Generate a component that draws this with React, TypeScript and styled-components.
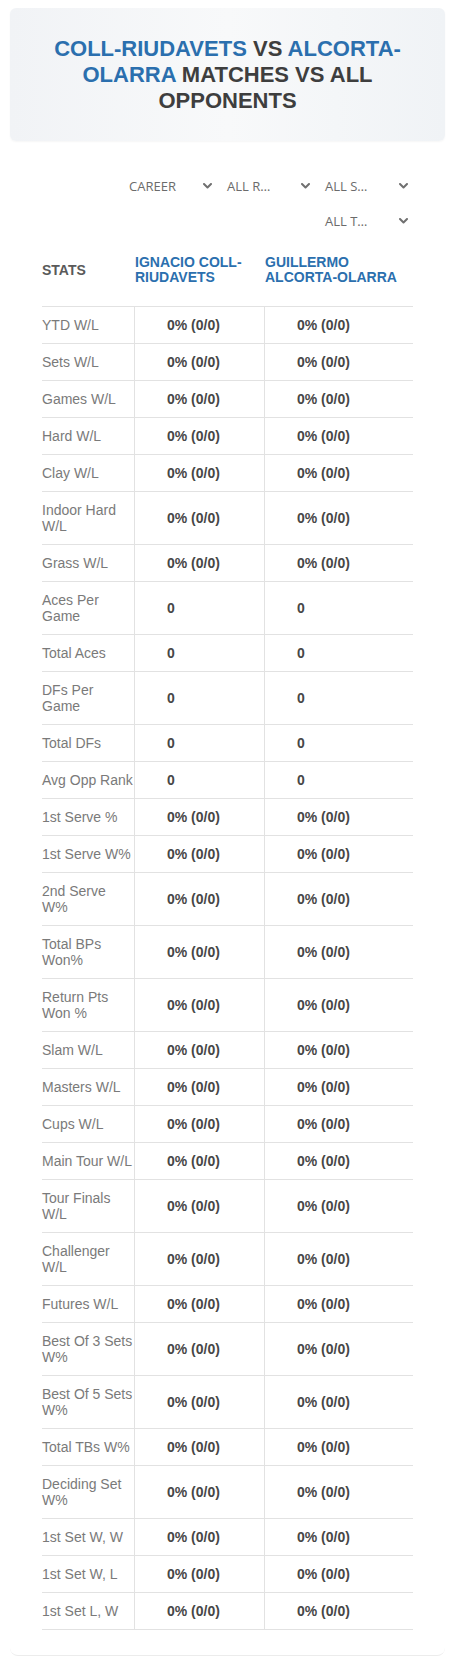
import React from "react";
import styled, { createGlobalStyle } from "styled-components";

const GlobalStyle = createGlobalStyle`
  body {
    margin: 0;
    background: #ffffff;
    font-family: "Liberation Sans", Arial, sans-serif;
  }
`;

const Page = styled.div`
  padding: 8px 10px 0;
`;

const Card = styled.div`
  border-bottom: 1px solid #ececec;
  border-radius: 0 0 8px 8px;
  padding-bottom: 25px;
`;

const Hero = styled.div`
  height: 133px;
  box-sizing: border-box;
  padding: 28px 30px 27px;
  border-radius: 6px;
  background: linear-gradient(90deg, #f1f3f6 0%, #f8f9fa 50%, #f0f3f6 100%);
  box-shadow: 0 1px 2px rgba(0, 0, 0, 0.04);
  text-align: center;
`;

const Title = styled.h1`
  margin: 0;
  font-size: 22px;
  line-height: 26px;
  font-weight: 700;
  color: #3e3e3e;
  text-transform: uppercase;
`;

const Player = styled.span`
  color: #2b6fae;
`;

const Body = styled.div`
  padding: 27px 32px 0;
`;

const Filters = styled.div`
  display: flex;
  flex-wrap: wrap;
  justify-content: flex-end;
  column-gap: 2px;
`;

const Select = styled.div`
  width: 96px;
  height: 35px;
  box-sizing: border-box;
  padding: 0 5px 0 8px;
  display: flex;
  align-items: center;
  justify-content: space-between;
  font-family: "Open Sans", sans-serif;
  font-size: 13px;
  color: #6b6b6b;
  text-transform: uppercase;
  cursor: pointer;
`;

const Chevron = () => (
  <svg width="9" height="6" viewBox="0 0 9 6" fill="none">
    <path d="M1 1l3.5 3.5L8 1" stroke="#707070" strokeWidth="2" strokeLinecap="round" strokeLinejoin="round" />
  </svg>
);

const Grid = styled.div`
  display: grid;
  grid-template-columns: 92px 130px 149px;
`;

const HeadRow = styled(Grid)`
  align-items: center;
  padding: 17px 0 21px;
  border-bottom: 1px solid #e2e2e2;
`;

const HeadCell = styled.div<{ $blue?: boolean }>`
  padding-left: ${p => (p.$blue ? "1px" : "0")};
  font-size: 14px;
  line-height: 15px;
  font-weight: 700;
  text-transform: uppercase;
  color: ${p => (p.$blue ? "#2b6fae" : "#5a5a5a")};
`;

const Row = styled(Grid)`
  border-bottom: 1px solid #e2e2e2;
`;

const Label = styled.div`
  padding: 10px 0;
  font-size: 14px;
  line-height: 16px;
  color: #7a7a7a;
`;

const Value = styled.div`
  display: flex;
  align-items: center;
  padding-left: 32px;
  border-left: 1px solid #e2e2e2;
  font-size: 14px;
  font-weight: 700;
  color: #474747;
`;

const pct = "0% (0/0)";

const stats: [string, string][] = [
  ["YTD W/L", pct],
  ["Sets W/L", pct],
  ["Games W/L", pct],
  ["Hard W/L", pct],
  ["Clay W/L", pct],
  ["Indoor Hard W/L", pct],
  ["Grass W/L", pct],
  ["Aces Per Game", "0"],
  ["Total Aces", "0"],
  ["DFs Per Game", "0"],
  ["Total DFs", "0"],
  ["Avg Opp Rank", "0"],
  ["1st Serve %", pct],
  ["1st Serve W%", pct],
  ["2nd Serve W%", pct],
  ["Total BPs Won%", pct],
  ["Return Pts Won %", pct],
  ["Slam W/L", pct],
  ["Masters W/L", pct],
  ["Cups W/L", pct],
  ["Main Tour W/L", pct],
  ["Tour Finals W/L", pct],
  ["Challenger W/L", pct],
  ["Futures W/L", pct],
  ["Best Of 3 Sets W%", pct],
  ["Best Of 5 Sets W%", pct],
  ["Total TBs W%", pct],
  ["Deciding Set W%", pct],
  ["1st Set W, W", pct],
  ["1st Set W, L", pct],
  ["1st Set L, W", pct],
];

const filters = ["Career", "All R…", "All S…", "All T…"];

export default function App() {
  return (
    <Page>
      <GlobalStyle />
      <Card>
        <Hero>
          <Title>
            <Player>Coll-Riudavets</Player> vs <Player>Alcorta-Olarra</Player> Matches vs All
            Opponents
          </Title>
        </Hero>
        <Body>
          <Filters>
            {filters.map(f => (
              <Select key={f}>
                <span>{f}</span>
                <Chevron />
              </Select>
            ))}
          </Filters>
          <HeadRow>
            <HeadCell>Stats</HeadCell>
            <HeadCell $blue>Ignacio Coll-Riudavets</HeadCell>
            <HeadCell $blue>Guillermo Alcorta-Olarra</HeadCell>
          </HeadRow>
          {stats.map(([label, value]) => (
            <Row key={label}>
              <Label>{label}</Label>
              <Value>{value}</Value>
              <Value>{value}</Value>
            </Row>
          ))}
        </Body>
      </Card>
    </Page>
  );
}
